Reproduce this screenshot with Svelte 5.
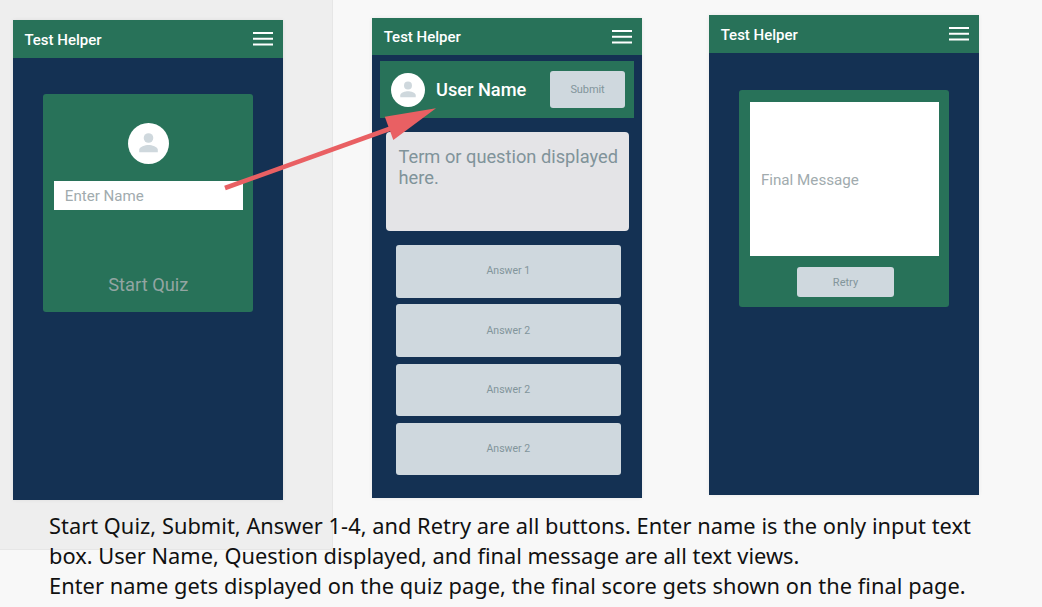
<script>
  const answers = ['Answer 1', 'Answer 2', 'Answer 2', 'Answer 2'];
  const notes = [
    'Start Quiz, Submit, Answer 1-4, and Retry are all buttons. Enter name is the only input text',
    'box. User Name, Question displayed, and final message are all text views.',
    'Enter name gets displayed on the quiz page, the final score gets shown on the final page.'
  ];
  const tracking = [0.035, 0, 0.055];
</script>

{#snippet bar()}
  <header class="bar">
    <span class="title">Test Helper</span>
    <svg class="menu" width="20" height="14" viewBox="0 0 20 14">
      <path d="M0 1H20M0 6.7H20M0 12.4H20" stroke="#fff" stroke-width="2" />
    </svg>
  </header>
{/snippet}

{#snippet avatar(size)}
  <svg class="avatar" width={size} height={size} viewBox="0 0 41 41">
    <circle cx="20.5" cy="20.5" r="20.5" fill="#fff" />
    <circle cx="20.5" cy="15" r="4.8" fill="#cfd8dd" />
    <path d="M11.2 29.2V26.8C11.2 23.7 17.3 22 20.5 22S29.8 23.7 29.8 26.8V29.2Z" fill="#cfd8dd" />
  </svg>
{/snippet}

<div class="board">
  <div class="selection"></div>
  <main class="phones">
    <section class="phone start">
      {@render bar()}
      <div class="card login">
        {@render avatar(41)}
        <div class="field">Enter Name</div>
        <div class="go">Start Quiz</div>
      </div>
    </section>

    <section class="phone quiz">
      {@render bar()}
      <div class="user">
        {@render avatar(34)}
        <span class="name">User Name</span>
        <div class="btn submit">Submit</div>
      </div>
      <div class="question">Term or question displayed<br />here.</div>
      <div class="answers">
        {#each answers as a}
          <div class="btn answer">{a}</div>
        {/each}
      </div>
    </section>

    <section class="phone final">
      {@render bar()}
      <div class="card result">
        <div class="message"><span>Final Message</span></div>
        <div class="btn retry">Retry</div>
      </div>
    </section>
  </main>

  <div class="notes">
    {#each notes as n, i}
      <div style="letter-spacing: {tracking[i]}px">{n}</div>
    {/each}
  </div>

  <svg class="arrow" width="1042" height="607" viewBox="0 0 1042 607">
    <path d="M225 188L392 128" stroke="#e96063" stroke-width="4.6" />
    <path d="M436 108.3L384.8 116.8L393.3 140Z" fill="#e96063" />
  </svg>
</div>

<style>
  :global(body) { margin: 0; overflow: hidden; background: #f8f8f8; }
  .board {
    position: relative;
    width: 1042px;
    height: 607px;
    overflow: hidden;
    background: #f8f8f8;
    font-family: Roboto, sans-serif;
  }
  .selection {
    position: absolute;
    left: -4px;
    top: -4px;
    width: 335px;
    height: 552px;
    background: #eee;
    border: 1px solid #e6e6e6;
    border-radius: 3px;
  }
  .phones {
    position: relative;
    display: flex;
    align-items: flex-start;
    height: 510.6px;
    padding-left: 13.3px;
  }
  .phone {
    width: 270px;
    height: 480px;
    flex: none;
    background: #143153;
    box-shadow: 0 0 4px rgba(0, 0, 0, 0.07);
  }
  .start { margin-top: 20px; }
  .quiz { margin: 18px 0 0 88.7px; }
  .final { margin: 15px 0 0 67px; }
  .bar {
    display: flex;
    align-items: center;
    justify-content: space-between;
    box-sizing: border-box;
    height: 38px;
    padding: 0 10px 0 11.7px;
    background: #287259;
    color: #fff;
  }
  .quiz .bar { height: 37px; }
  .title { font-size: 15px; font-weight: 500; line-height: 20px; padding-top: 2px; }
  .start .title { margin-left: -0.6px; }
  .quiz .title { padding-top: 1px; }
  .avatar { display: block; flex: none; }
  .card {
    display: flex;
    flex-direction: column;
    align-items: center;
    box-sizing: border-box;
    width: 210px;
    margin: 36.4px 0 0 30px;
    border-radius: 3px;
    background: #287259;
  }
  .login { height: 217.3px; padding-top: 28.3px; }
  .field {
    box-sizing: border-box;
    width: 189px;
    height: 29.6px;
    margin-top: 17px;
    padding-left: 11px;
    background: #fff;
    color: #a1abae;
    font-size: 15.1px;
    line-height: 31px;
  }
  .go { margin-top: 62.7px; color: #93a5a2; font-size: 18.3px; line-height: 24px; }
  .user {
    display: flex;
    align-items: center;
    box-sizing: border-box;
    width: 254px;
    height: 57px;
    margin: 6px 0 0 8px;
    padding: 0 9px 0 11px;
    background: #287259;
  }
  .name { margin-left: 11px; color: #fff; font-size: 18.2px; font-weight: 500; line-height: 24px; padding-top: 1px; }
  .btn {
    display: flex;
    align-items: center;
    justify-content: center;
    border-radius: 3px;
    background: #cfd8de;
    color: #82959b;
    font-size: 11px;
  }
  .submit { width: 75px; height: 37.5px; margin-left: auto; letter-spacing: -0.1px; }
  .question {
    box-sizing: border-box;
    width: 243px;
    height: 99px;
    margin: 14px 0 0 14px;
    padding: 15px 0 0 12.5px;
    border-radius: 4px;
    background: #e4e4e7;
    color: #80939a;
    font-size: 18.25px;
    line-height: 20.6px;
    white-space: nowrap;
  }
  .answers {
    display: flex;
    flex-direction: column;
    gap: 6.8px;
    width: 225px;
    margin: 14.2px 0 0 23.8px;
  }
  .answer { box-sizing: border-box; height: 52.4px; padding-bottom: 1px; font-size: 10.5px; }
  .result { height: 217px; margin-top: 37px; padding-top: 11.6px; }
  .message {
    display: flex;
    align-items: center;
    box-sizing: border-box;
    width: 189px;
    height: 154.5px;
    margin-left: 0.8px;
    padding: 1px 0 0 11px;
    background: #fff;
    color: #a1abae;
    font-size: 15.2px;
  }
  .message span { height: 17px; line-height: 18px; overflow: hidden; }
  .retry { width: 97.5px; height: 30px; margin: 11px 0 0 3px; }
  .notes {
    position: relative;
    padding-left: 49px;
    color: #111;
    font-family: "Noto Sans", "Open Sans", sans-serif;
    font-size: 21.8px;
    line-height: 30.3px;
    white-space: nowrap;
  }
  .arrow { position: absolute; left: 0; top: 0; }
</style>
